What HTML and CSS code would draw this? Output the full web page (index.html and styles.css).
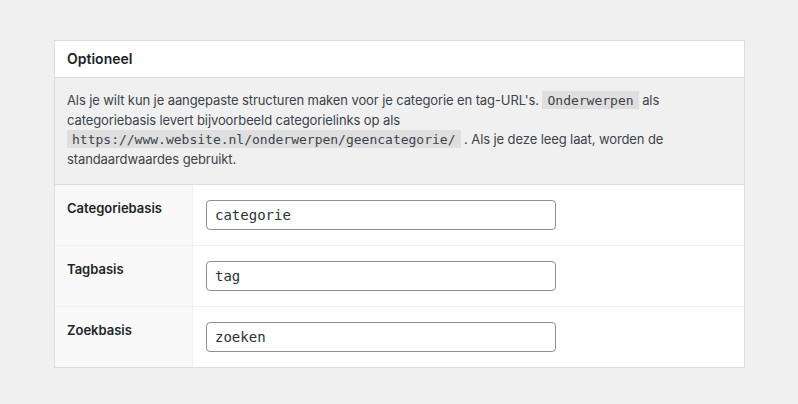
FILE: index.html
```html
<!DOCTYPE html>
<html lang="nl">
<head>
<meta charset="utf-8">
<title>Optioneel</title>
<link rel="stylesheet" href="styles.css">
</head>
<body>
<div class="page">
  <section class="card">
    <header class="card-header">
      <h2 class="card-title">Optioneel</h2>
    </header>
    <div class="card-desc">
      <p>Als je wilt kun je aangepaste structuren maken voor je categorie en tag-URL's. <code>Onderwerpen</code> als categoriebasis levert bijvoorbeeld categorielinks op als <code>https://www.website.nl/onderwerpen/geencategorie/</code> . Als je deze leeg laat, worden de standaardwaardes gebruikt.</p>
    </div>
    <div class="form-table">
      <div class="row">
        <div class="label">Categoriebasis</div>
        <div class="field"><input class="text-input" type="text" value="categorie"></div>
      </div>
      <div class="row">
        <div class="label">Tagbasis</div>
        <div class="field"><input class="text-input" type="text" value="tag"></div>
      </div>
      <div class="row">
        <div class="label">Zoekbasis</div>
        <div class="field"><input class="text-input" type="text" value="zoeken"></div>
      </div>
    </div>
  </section>
</div>
</body>
</html>
```

FILE: styles.css
```css
* { box-sizing: border-box; }
html, body {
  margin: 0;
  padding: 0;
  background: #f0f0f1;
}
body {
  font-family: Inter, "Noto Sans", "Liberation Sans", sans-serif;
  font-size: 13px;
  color: #3c434a;
}
.page {
  padding: 40px 53px 0 54px;
}
.card {
  width: 691px;
  border: 1px solid #dcdcde;
  background: #fff;
  box-shadow: 0 1px 1px rgba(0,0,0,.04);
}
.card-header {
  height: 37px;
  display: flex;
  align-items: center;
  padding: 0 12px;
  border-bottom: 1px solid #dcdcde;
  background: #fff;
}
.card-title {
  margin: 0;
  font-size: 14px;
  font-weight: 600;
  color: #1d2327;
  line-height: 20px;
}
.card-desc {
  background: #f0f0f1;
  padding: 13px 12px 15px;
  border-bottom: 1px solid #dcdcde;
}
.card-desc p {
  margin: 0;
  line-height: 19.5px;
  letter-spacing: -0.1px;
}
code {
  font-family: "DejaVu Sans Mono", monospace;
  font-size: 13px;
  letter-spacing: 0;
  background: rgba(0,0,0,.07);
  padding: 2px 5px 1px;
  color: #3c434a;
}
.form-table {
  display: flex;
  flex-direction: column;
}
.row {
  display: grid;
  grid-template-columns: 138px 1fr;
  height: 61px;
  border-top: 1px solid #f0f0f1;
}
.row:first-child { border-top: none; height: 60px; }
.label {
  background: #f9f9f9;
  border-right: 1px solid #f0f0f1;
  padding: 13px 12px;
  font-weight: 600;
  color: #1d2327;
  line-height: 20px;
}
.field {
  padding: 15px 13px;
}
.text-input {
  display: block;
  width: 350px;
  height: 30px;
  margin: 0;
  border: 1px solid #8c8f94;
  border-radius: 4px;
  padding: 0 8px;
  font-family: "DejaVu Sans Mono", monospace;
  font-size: 14px;
  color: #2c3338;
  background: #fff;
  outline: none;
}
```
